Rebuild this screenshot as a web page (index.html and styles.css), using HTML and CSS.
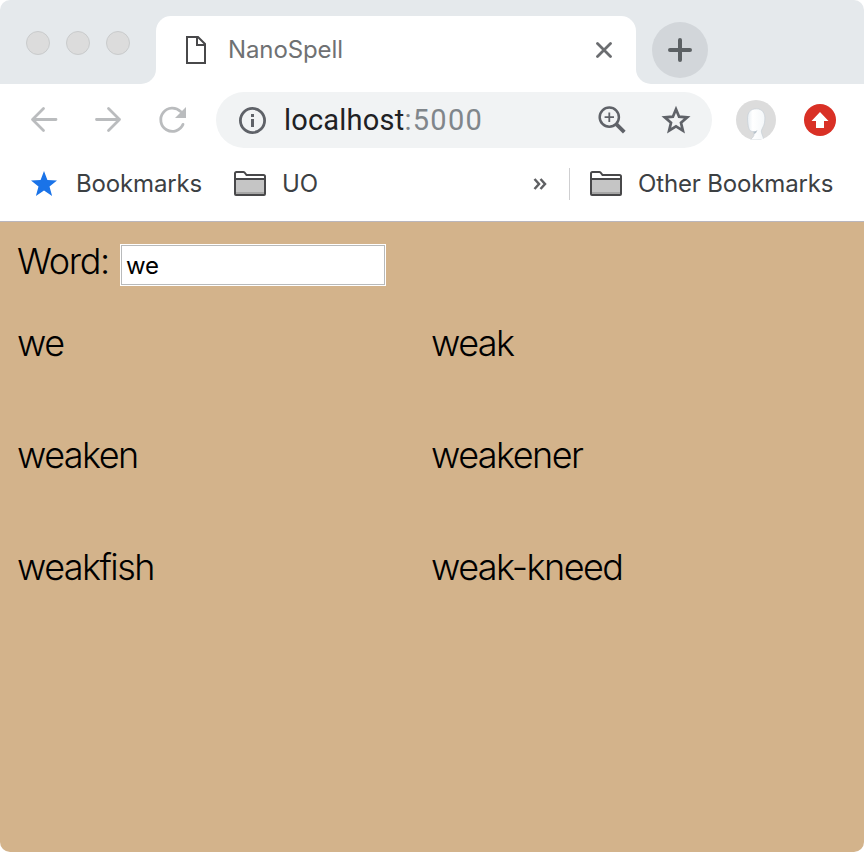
FILE: index.html
```html
<!DOCTYPE html>
<html lang="en">
<head>
<meta charset="utf-8">
<title>NanoSpell</title>
<link rel="stylesheet" href="styles.css">
</head>
<body>
<div class="window">
  <header class="tabstrip">
    <div class="lights"><div class="lights-inner"><i></i><i></i><i></i></div></div>
    <div class="tab">
      <svg class="doc" width="20" height="28" viewBox="0 0 20 28" fill="none" stroke="#48484a" stroke-width="2"><path d="M1 1h11l7 7v19H1z"/><path d="M11 1v8h8"/></svg>
      <span class="tab-title">NanoSpell</span>
      <svg width="16" height="16" viewBox="0 0 16 16" stroke="#6b6d70" stroke-width="2.8" stroke-linecap="round"><path d="M1.500 1.500l13 13M14.500 1.500l-13 13"/></svg>
    </div>
    <div class="strip-end">
      <div class="new-tab"><svg width="24" height="24" viewBox="0 0 24 24" stroke="#5c6164" stroke-width="4" stroke-linecap="round"><path d="M12 2v20M2 12h20"/></svg></div>
    </div>
  </header>
  <nav class="toolbar">
    <svg class="back" width="28" height="28" viewBox="0 0 28 28" fill="none" stroke="#babcbe" stroke-width="2.8" stroke-linecap="round" stroke-linejoin="round"><path d="M26 13.500H3M13.500 2.500L2.500 13.500l11 11"/></svg>
    <svg class="forward" width="28" height="28" viewBox="0 0 28 28" fill="none" stroke="#babcbe" stroke-width="2.8" stroke-linecap="round" stroke-linejoin="round"><path d="M2.500 13.500h23M14.500 2.500l11 11-11 11"/></svg>
    <svg class="reload" width="28" height="28" viewBox="0 0 28 28"><path d="M22.600 5.600A11.600 11.600 0 1 0 25 18.400" fill="none" stroke="#babcbe" stroke-width="2.8" stroke-linecap="round"/><path d="M28 1v11H17z" fill="#babcbe"/></svg>
    <div class="address">
      <svg class="info" width="28" height="28" viewBox="0 0 28 28"><circle cx="14.500" cy="14.500" r="12.1" fill="none" stroke="#5f6268" stroke-width="2.8"/><path d="M13 8h3v3h-3zM13 13h3v8h-3z" fill="#5f6268"/></svg>
      <span class="url">localhost<span class="port">:5000</span></span>
      <svg class="zoom" width="28" height="28" viewBox="0 0 28 28" fill="none" stroke="#5f6268"><circle cx="11.300" cy="11.200" r="9.600" stroke-width="2.500"/><path d="M11.300 6.500v9.400M6.600 11.200H16" stroke-width="1.800"/><path d="M18.300 18.200l8 8" stroke-width="3.800"/></svg>
      <svg class="star" width="30" height="30" viewBox="0 0 30 30" fill="none" stroke="#5f6268" stroke-width="2.700"><path d="M15 4.200l3.100 7.500 8.100.7-6.200 5.300 1.900 7.900-6.900-4.200-6.900 4.200L10 17.700l-6.200-5.300 8.100-.7z"/></svg>
    </div>
    <svg class="avatar" width="40" height="40" viewBox="0 0 40 40"><defs><clipPath id="disc"><circle cx="20" cy="20" r="20"/></clipPath><linearGradient id="face"><stop offset="0" stop-color="#e7edf2"/><stop offset=".3" stop-color="#fff"/><stop offset="1" stop-color="#f4f7f9"/></linearGradient></defs><g clip-path="url(#disc)"><path fill="#dcdcdc" d="M0 0h40v40H0z"/><path d="M11.500 20C11 12 15 8.800 20.500 8.800S29.500 13 28.800 20C28.500 26 26 28 25.300 31C25.500 34 27 36 28 40H14C16.500 38 18.500 36 18 33.500L17.500 31.500C14 31.500 12.300 30.500 11.500 20Z" fill="url(#face)" stroke="#c7d0d7" stroke-width=".7"/><path d="M17.500 31.500q3-.2 4-1.500-.8 3-3.500 4z" fill="#b7c2ca"/></g></svg>
    <svg class="update" width="32" height="32" viewBox="0 0 32 32"><circle cx="16" cy="16" r="16" fill="#d93025"/><path d="M16 8l8.500 9H20v7h-8v-7H7.500z" fill="#fff"/></svg>
  </nav>
  <div class="bookmarks">
    <svg class="blue-star" width="26" height="26" viewBox="0 0 26 26"><path d="M13 0l3.400 8.900 9.600.6-7.500 6L21.100 25 13 19.600 4.900 25l2.600-9.500-7.500-6 9.600-.6z" fill="#1a73e8"/></svg>
    <span class="bm b1">Bookmarks</span>
    <svg class="folder" width="32" height="26" viewBox="0 0 32 26"><path d="M1 9V2.500Q1 1 2.500 1H9.500Q10.500 1 11 2L12.500 4H29.500Q31 4 31 5.500V9" fill="#fff" stroke="#48484a" stroke-width="2"/><rect x="1" y="8" width="30" height="16" rx="1" fill="#c5c5c5" stroke="#48484a" stroke-width="2"/><path d="M2 22h28" stroke="#a6a6a6" stroke-width="2"/></svg>
    <span class="bm b2">UO</span>
    <svg class="more" width="14" height="12" viewBox="0 0 14 12" fill="none" stroke="#5f6063" stroke-width="2.500"><path d="M1.500 1L6 6l-4.500 5M7.500 1L12 6l-4.500 5"/></svg>
    <i class="divider"></i>
    <svg class="folder" width="32" height="26" viewBox="0 0 32 26"><path d="M1 9V2.500Q1 1 2.500 1H9.500Q10.500 1 11 2L12.500 4H29.500Q31 4 31 5.500V9" fill="#fff" stroke="#48484a" stroke-width="2"/><rect x="1" y="8" width="30" height="16" rx="1" fill="#c5c5c5" stroke="#48484a" stroke-width="2"/><path d="M2 22h28" stroke="#a6a6a6" stroke-width="2"/></svg>
    <span class="bm b3">Other Bookmarks</span>
  </div>
  <main class="page">
    <div class="form"><label for="word">Word:</label><input id="word" type="text" value="we"></div>
    <div class="words">
      <span>we</span><span>weak</span>
      <span>weaken</span><span>weakener</span>
      <span>weakfish</span><span>weak-kneed</span>
    </div>
  </main>
</div>
</body>
</html>
```
FILE: styles.css
```css
* { box-sizing: border-box; }
body { margin: 0; background: #fff; }
svg { display: block; flex: none; }
.window {
  width: 864px; height: 852px; overflow: hidden;
  display: flex; flex-direction: column;
  border-radius: 10px; background: #fff;
  font-family: Roboto, "Liberation Sans", sans-serif;
}
.tabstrip { display: flex; height: 84px; flex: none; }
.lights { width: 156px; background: #e5e9ec; border-bottom-right-radius: 15px; }
.lights-inner { display: flex; gap: 16px; padding: 31px 0 0 26px; }
.lights i { width: 24px; height: 24px; border-radius: 50%; border: 1px solid #c9cbcc; background: #dcdcdc; }
.tab {
  width: 480px; display: flex; align-items: center; padding: 16px 24px 0 30px;
  background: linear-gradient(#e5e9ec 50%, #fff 50%);
  position: relative; z-index: 0;
}
.tab::before { content: ""; position: absolute; z-index: -1; inset: 16px 0 0; background: #fff; border-radius: 15px 15px 0 0; }
.tab-title { flex: 1; margin-left: 22px; font: 24px/28px Inter, sans-serif; color: #6f7173; letter-spacing: -.1px; }
.strip-end { flex: 1; background: #e5e9ec; border-bottom-left-radius: 15px; padding: 22px 0 0 16px; }
.new-tab { width: 56px; height: 56px; border-radius: 50%; background: #d2d6da; display: grid; place-items: center; }
.toolbar { height: 64px; flex: none; display: flex; align-items: center; padding: 8px 28px 0 30px; }
.forward { margin-left: 36px; }
.reload { margin-left: 36px; }
.address { width: 496px; height: 56px; margin-left: 30px; border-radius: 28px; background: #f1f3f4; display: flex; align-items: center; padding: 0 21px 0 22px; }
.url { flex: 1; margin-left: 18px; font-size: 29px; line-height: 34px; color: #202124; letter-spacing: .2px; }
.port { color: #80868b; letter-spacing: 1.3px; }
.star { margin-left: 35px; }
.avatar { margin-left: 24px; }
.update { margin-left: 28px; }
.bookmarks { height: 73px; flex: none; display: flex; align-items: center; padding: 0 0 1px 31px; }
.bm { font: 24px/30px Inter, sans-serif; color: #3c4043; white-space: nowrap; letter-spacing: -.15px; }
.b1 { width: 177px; padding-left: 19px; }
.b2 { width: 267px; padding-left: 16px; }
.divider { width: 1px; height: 32px; background: #cfcfd1; margin: 0 20px 0 22px; }
.b3 { margin-left: 16px; }
.page { flex: 1; border-top: 1px solid #b9b6bd; background: #d3b38b; color: #000; font: 300 36px/42px Inter, sans-serif; letter-spacing: -1.55px; padding: 22px 17px 0; }
.form { display: flex; height: 42px; }
.form label { width: 103px; line-height: 34px; letter-spacing: -1.3px; }
.form input { width: 266px; height: 42px; margin: 0; padding: 0 5px; border: 1px solid #fff; outline: 1px solid #b8babb; outline-offset: -2px; background: #fff; font: 24px/30px Inter, sans-serif; color: #000; letter-spacing: -.2px; }
.words { display: grid; grid-template-columns: 414px 1fr; grid-auto-rows: 112px; padding-top: 36px; }
```
